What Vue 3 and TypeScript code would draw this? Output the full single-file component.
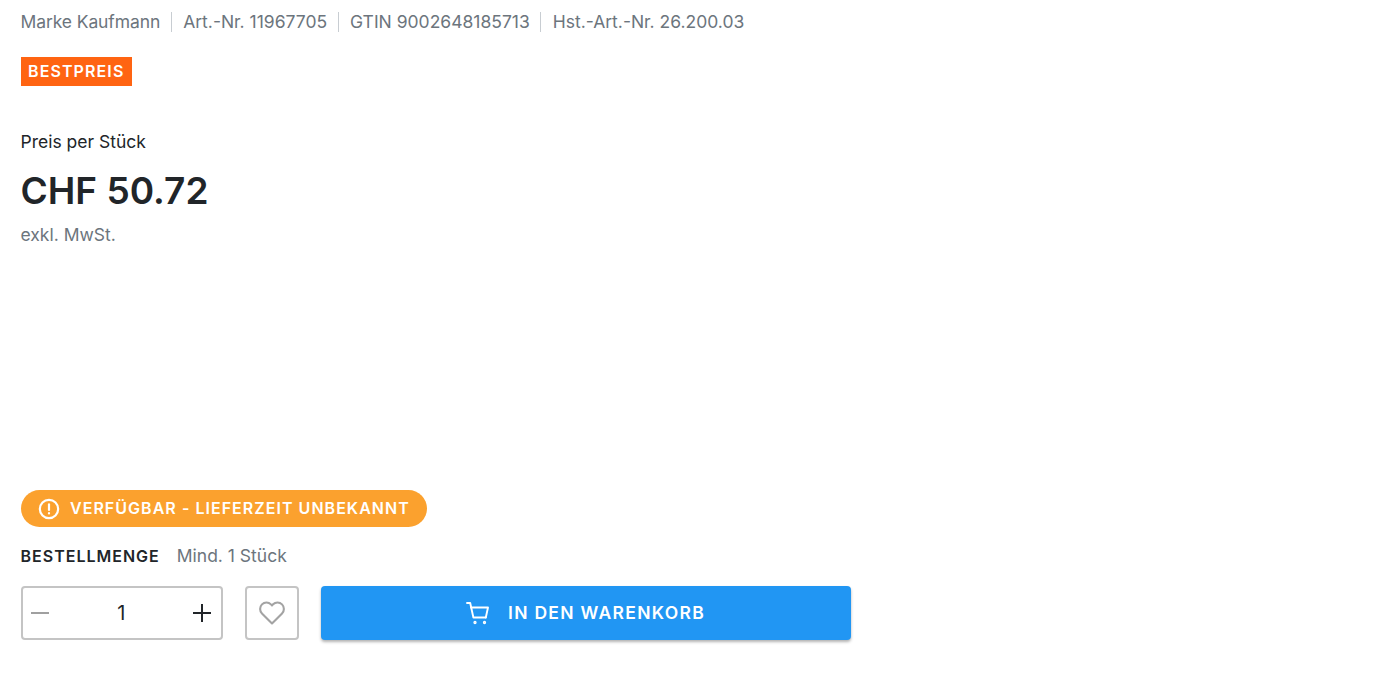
<template>
  <div class="product">
    <ul class="meta">
      <li v-for="item in meta" :key="item">{{ item }}</li>
    </ul>

    <span class="badge">BESTPREIS</span>

    <div class="price-label">Preis per Stück</div>
    <div class="price">CHF 50.72</div>
    <div class="tax">exkl. MwSt.</div>

    <div class="availability">
      <svg class="avail-icon" viewBox="0 0 24 24" fill="none" stroke="currentColor" stroke-width="2.4" stroke-linecap="round">
        <circle cx="12" cy="12" r="10" />
        <path d="M12 7v6" />
        <path d="M12 16.6v.2" />
      </svg>
      <span class="avail-text">VERFÜGBAR - LIEFERZEIT UNBEKANNT</span>
    </div>

    <div class="amount">
      <span class="amount-title">BESTELLMENGE</span>
      <span class="amount-hint">Mind. 1 Stück</span>
    </div>

    <div class="actions">
      <div class="stepper">
        <svg class="step-icon minus" viewBox="0 0 20 20" fill="none" stroke="currentColor" stroke-width="2">
          <path d="M1 10h18" />
        </svg>
        <span class="qty">{{ qty }}</span>
        <svg class="step-icon" viewBox="0 0 20 20" fill="none" stroke="currentColor" stroke-width="2">
          <path d="M1 10h18M10 1v18" />
        </svg>
      </div>

      <button class="wish" type="button">
        <svg viewBox="0 0 24 24" fill="none" stroke="currentColor" stroke-width="1.8" stroke-linejoin="round">
          <path d="M12 21 3.4 12.4a5.6 5.6 0 0 1 0-7.8 5.4 5.4 0 0 1 7.7 0l.9.9.9-.9a5.4 5.4 0 0 1 7.7 0 5.6 5.6 0 0 1 0 7.8z" />
        </svg>
      </button>

      <button class="cart" type="button">
        <svg viewBox="0 0 24 24" fill="none" stroke="currentColor" stroke-width="1.9" stroke-linecap="round" stroke-linejoin="round">
          <path d="M1 2h3.2l3.2 14.5h12.4" />
          <path d="M5 6.5h17l-2.2 10" />
          <circle cx="9" cy="21.5" r="0.7" />
          <circle cx="18.5" cy="21.5" r="0.7" />
        </svg>
        <span class="cart-text">IN DEN WARENKORB</span>
      </button>
    </div>
  </div>
</template>

<script setup lang="ts">
import { ref } from 'vue'

const meta = ['Marke Kaufmann', 'Art.-Nr. 11967705', 'GTIN 9002648185713', 'Hst.-Art.-Nr. 26.200.03']
const qty = ref(1)
</script>

<style>
html,
body {
  background: #fff;
}
</style>

<style scoped>
.product {
  height: 676px;
  box-sizing: border-box;
  padding: 12px 0 0 20.5px;
  font-family: Inter, 'Noto Sans', sans-serif;
  color: #212529;
  overflow: hidden;
}

.meta {
  display: flex;
  list-style: none;
  margin: 0;
  padding: 0;
  font-size: 17.5px;
  line-height: 20px;
  color: #6c757d;
}

.meta li:first-child {
  letter-spacing: -0.1px;
}

.meta li + li {
  margin-left: 10.5px;
  padding-left: 11.5px;
  border-left: 1px solid #c8cdd2;
}

.badge {
  display: block;
  width: fit-content;
  margin-top: 25px;
  padding: 0 7.5px;
  height: 29px;
  line-height: 29px;
  background: #ff6412;
  color: #fff;
  font-size: 16px;
  font-weight: 600;
  letter-spacing: 1.1px;
}

.price-label {
  margin-top: 45px;
  font-size: 17.5px;
  line-height: 22px;
}

.price {
  margin-top: 15px;
  font-size: 37px;
  line-height: 46px;
  font-weight: 600;
}

.tax {
  margin-top: 10px;
  font-size: 17.5px;
  line-height: 22px;
  color: #6c757d;
}

.availability {
  display: flex;
  align-items: center;
  width: 406px;
  height: 37px;
  box-sizing: border-box;
  margin-top: 244px;
  padding-left: 17px;
  border-radius: 19px;
  background: #fba12e;
  color: #fff;
  font-size: 16px;
  font-weight: 600;
  letter-spacing: 1.03px;
}

.avail-icon {
  width: 22px;
  height: 22px;
  margin-right: 10.5px;
}

.avail-text {
  margin-bottom: 2px;
}

.amount {
  display: flex;
  align-items: center;
  margin-top: 18px;
  line-height: 22px;
}

.amount-title {
  font-size: 16px;
  font-weight: 600;
  letter-spacing: 1px;
}

.amount-hint {
  margin-left: 17px;
  font-size: 17.5px;
  color: #6c757d;
}

.actions {
  display: flex;
  margin-top: 19px;
  height: 54px;
}

.stepper {
  display: flex;
  align-items: center;
  justify-content: space-between;
  width: 202.5px;
  box-sizing: border-box;
  padding: 0 8.5px 0 7.5px;
  border: 2px solid #c4c4c4;
  border-radius: 4px;
}

.step-icon {
  width: 20px;
  height: 20px;
}

.minus {
  color: #a0a0a0;
}

.qty {
  font-size: 20px;
}

.wish {
  display: flex;
  align-items: center;
  justify-content: center;
  width: 54px;
  margin-left: 22px;
  padding: 0;
  border: 2px solid #c4c4c4;
  border-radius: 4px;
  background: #fff;
  color: #a3a3a3;
}

.wish svg {
  width: 28px;
  height: 28px;
}

.cart {
  display: flex;
  align-items: center;
  justify-content: center;
  width: 530px;
  margin-left: 21.5px;
  padding: 0;
  border: 0;
  border-radius: 4px;
  background: #2196f3;
  color: #fff;
  font-family: inherit;
  font-size: 17.5px;
  font-weight: 600;
  letter-spacing: 1.3px;
  box-shadow: 0 2px 3px rgba(0, 0, 0, 0.3);
}

.cart svg {
  width: 24px;
  height: 24px;
  margin-right: 18px;
}

.cart-text {
  margin-bottom: 2px;
}
</style>
